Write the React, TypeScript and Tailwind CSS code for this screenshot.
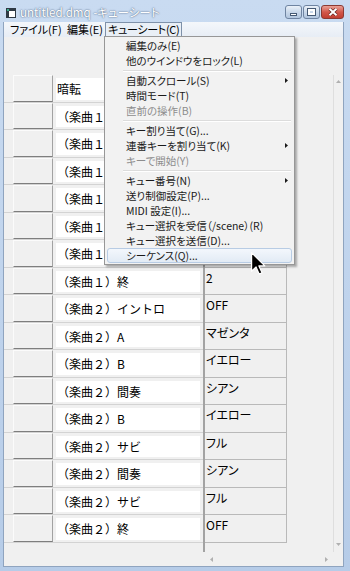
import React from 'react';

const rows: [string, string][] = [
  ['暗転', ''],
  ['（楽曲１）イントロ', ''],
  ['（楽曲１）A', ''],
  ['（楽曲１）B', ''],
  ['（楽曲１）サビ', ''],
  ['（楽曲１）間奏', ''],
  ['（楽曲１）サビ', ''],
  ['（楽曲１）終', '2'],
  ['（楽曲２）イントロ', 'OFF'],
  ['（楽曲２）A', 'マゼンタ'],
  ['（楽曲２）B', 'イエロー'],
  ['（楽曲２）間奏', 'シアン'],
  ['（楽曲２）B', 'イエロー'],
  ['（楽曲２）サビ', 'フル'],
  ['（楽曲２）間奏', 'シアン'],
  ['（楽曲２）サビ', 'フル'],
  ['（楽曲２）終', 'OFF'],
];

type MI = { l: string; sub?: boolean; dis?: boolean; hover?: boolean } | 'sep';

const menu: MI[] = [
  { l: '編集のみ(E)' },
  { l: '他のウインドウをロック(L)' },
  'sep',
  { l: '自動スクロール(S)', sub: true },
  { l: '時間モード(T)' },
  { l: '直前の操作(B)', dis: true },
  'sep',
  { l: 'キー割り当て(G)...' },
  { l: '連番キーを割り当て(K)', sub: true },
  { l: 'キーで開始(Y)', dis: true },
  'sep',
  { l: 'キュー番号(N)', sub: true },
  { l: '送り制御設定(P)...' },
  { l: 'MIDI 設定(I)...' },
  { l: 'キュー選択を受信（/scene）(R)' },
  { l: 'キュー選択を送信(D)...' },
  { l: 'シーケンス(Q)...', hover: true },
];

function Arrow({ dir }: { dir: 'up' | 'down' | 'left' | 'right' }) {
  const pts =
    dir === 'up'
      ? '0,3 2.5,0 5,3'
      : dir === 'down'
      ? '0,0 5,0 2.5,3'
      : dir === 'left'
      ? '3,0 3,5 0,2.5'
      : '0,0 0,5 3,2.5';
  const w = dir === 'up' || dir === 'down' ? 5 : 3;
  const h = dir === 'up' || dir === 'down' ? 3 : 5;
  return (
    <svg width={w} height={h} viewBox={`0 0 ${w} ${h}`}>
      <polygon points={pts} fill="#b0b0b0" />
    </svg>
  );
}

export default function App() {
  return (
    <div className="w-[350px] h-[571px] relative overflow-hidden flex flex-col bg-gradient-to-b from-[#c9dbf1] to-[#b6cce8] font-['Noto_Sans_CJK_JP',sans-serif] text-black">
      {/* Title bar */}
      <div className="h-[22px] flex items-start shrink-0">
        <div className="mt-[8px] ml-[6px] w-[10px] h-[10px]">
          <svg width="10" height="10" viewBox="0 0 10 10">
            <rect x="0" y="0" width="10" height="10" fill="#2f3944" />
            <rect x="3" y="3" width="6" height="6" fill="#ffffff" />
            <rect x="1" y="1" width="2" height="2" fill="#3cae8c" />
          </svg>
        </div>
        <div className="ml-[4px] mt-[4px] text-[11.5px] leading-[16px] text-white whitespace-nowrap [text-shadow:0_0_2px_#4f6583,0_0_1px_#6d819c] [font-feature-settings:'palt']">
          untitled.dmq -キューシート
        </div>
        <div className="ml-auto mr-[6px] mt-[5px] flex gap-[1px]">
          <div className="w-[17px] h-[14px] rounded-[3px] border border-[#6f84a1] bg-gradient-to-b from-[#eaf1f9] via-[#c9d8ea] to-[#b2c6df] flex items-end justify-center pb-[2px]">
            <div className="w-[7px] h-[3px] bg-white border border-[#465a74]" />
          </div>
          <div className="w-[17px] h-[14px] rounded-[3px] border border-[#6f84a1] bg-gradient-to-b from-[#eaf1f9] via-[#c9d8ea] to-[#b2c6df] flex items-center justify-center">
            <div className="w-[7px] h-[6px] border-[2px] border-white outline outline-1 outline-[#465a74]" />
          </div>
          <div className="w-[23px] h-[14px] rounded-[3px] border border-[#8b3a33] bg-gradient-to-b from-[#e9a096] via-[#d2584c] to-[#c13d30] flex items-center justify-center">
            <svg width="10" height="8" viewBox="0 0 10 8">
              <path d="M1.5 0.8 L8.5 7.2 M8.5 0.8 L1.5 7.2" stroke="#5a1d18" strokeWidth="3.2" />
              <path d="M1.5 0.8 L8.5 7.2 M8.5 0.8 L1.5 7.2" stroke="#ffffff" strokeWidth="2" />
            </svg>
          </div>
        </div>
      </div>

      {/* Body */}
      <div className="ml-[3px] mr-[6px] mb-[4px] flex-1 flex flex-col border-l border-r border-b border-[#8fa4bf]">
        {/* Menubar */}
        <div className="h-[15px] shrink-0 flex items-stretch bg-gradient-to-b from-[#f4f7fb] to-[#e7edf5] text-[11px] leading-[13px] whitespace-nowrap [font-feature-settings:'palt']">
          <div className="w-[60px] pl-[6px] flex items-center">ファイル(F)</div>
          <div className="w-[41px] pl-[3px] flex items-center">編集(E)</div>
          <div className="w-[77px] pl-[2px] flex items-center border border-[#7e91a9] bg-[#e9eff6] tracking-[-0.3px] overflow-hidden">キューシート(C)</div>
        </div>

        {/* Client */}
        <div className="flex-1 flex flex-col bg-[#f0f0f0]">
          <div className="h-[38px] shrink-0" />
          <div className="h-[477px] flex">
            {/* Left pane */}
            <div className="w-[199px] flex flex-col">
              {rows.map(([t], i) => (
                <div key={i} className={`flex border-b border-[#d3d3d3] ${i % 2 === 0 ? 'h-[28px]' : 'h-[27px]'}`}>
                  <div className="w-[9px]" />
                  <div className="w-[40px] h-full bg-[#f0f0f0] border-t border-l border-t-[#fbfbfb] border-l-[#fbfbfb] border-r border-r-[#a2a2a2] border-b border-b-[#7e7e7e]" />
                  <div className="flex-1 pl-[3px] pr-[3px] pt-[3px] pb-[2px]">
                    <div className="h-full bg-white flex items-center pl-[1px] text-[12px] leading-[14px] whitespace-nowrap overflow-hidden">
                      {t}
                    </div>
                  </div>
                </div>
              ))}
            </div>
            {/* Splitter */}
            <div className="w-[2px] bg-[#a3a3a3]" />
            {/* Right pane */}
            <div className="w-[128px] flex flex-col">
              {rows.map(([, v], i) => (
                <div key={i} className={`flex ${i % 2 === 0 ? 'h-[28px]' : 'h-[27px]'}`}>
                  <div className="w-[82px] h-full border-r border-b border-[#b9b9b9] pl-[1px] pt-[2px] text-[12px] leading-[16px] whitespace-nowrap [font-feature-settings:'palt']">
                    {v}
                  </div>
                </div>
              ))}
            </div>
            {/* Vertical scrollbar */}
            <div className="w-[10px] border-l border-[#dedede] flex flex-col items-center justify-between pt-[5px] pb-[6px]">
              <Arrow dir="up" />
              <Arrow dir="down" />
            </div>
          </div>
          <div className="h-[14px] flex">
            <div className="w-[201px]" />
            <div className="w-[128px] flex items-center justify-between pl-[5px] pr-[5px]">
              <Arrow dir="left" />
              <Arrow dir="right" />
            </div>
            <div className="w-[10px]" />
          </div>
        </div>
      </div>

      {/* Dropdown menu */}
      <div className="absolute left-[104px] top-[36px] w-[191px] border border-[#979797] bg-[#f2f2f2] px-[2px] py-[1px] shadow-[2px_2px_2px_rgba(0,0,0,0.3)] text-[10.5px] leading-[13px] [font-feature-settings:'palt']">
        {menu.map((m, i) =>
          m === 'sep' ? (
            <div key={i} className="h-[5px] flex flex-col justify-center pl-[16px] pr-[1px]">
              <div className="border-t border-[#dcdcdc] border-b border-b-white" />
            </div>
          ) : (
            <div
              key={i}
              className={`h-[15px] flex items-center pl-[18px] pr-[2px] rounded-[3px] border whitespace-nowrap ${
                m.hover
                  ? 'border-[#b8cce4] bg-gradient-to-b from-[#f3f7fc] to-[#e2ebf5]'
                  : 'border-transparent'
              } ${m.dis ? 'text-[#8d8d8d]' : 'text-[#1a1a1a]'}`}
            >
              <span className="leading-[13px]">{m.l}</span>
              {m.sub && (
                <span className="ml-auto mr-[1px]">
                  <svg width="3" height="5" viewBox="0 0 3 5">
                    <polygon points="0,0 0,5 3,2.5" fill="#1a1a1a" />
                  </svg>
                </span>
              )}
            </div>
          )
        )}
      </div>

      {/* Mouse cursor */}
      <div className="absolute left-[251px] top-[252px]">
        <svg width="15" height="23" viewBox="0 0 12.5 19">
          <path d="M0.5 0.5 L0.5 16 L4.2 12.4 L6.8 18.3 L9.2 17.3 L6.6 11.5 L11.5 11.5 Z" fill="#000" stroke="#fff" strokeWidth="1" strokeLinejoin="round" />
        </svg>
      </div>
    </div>
  );
}
